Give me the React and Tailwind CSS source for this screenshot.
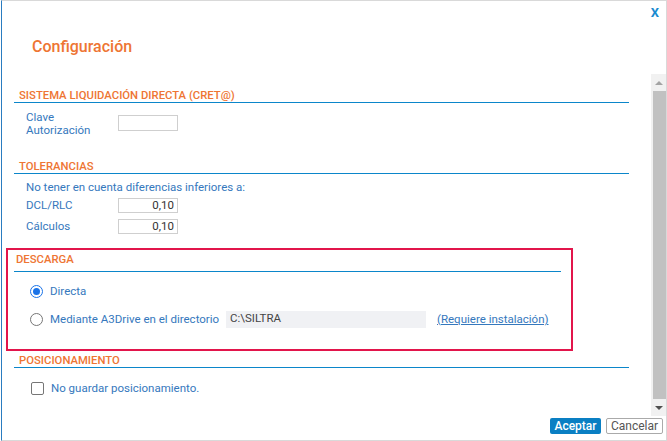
import { useState } from 'react'

const font = { fontFamily: 'Roboto, "Noto Sans", sans-serif' }

function Heading({ children, className = '' }) {
  return (
    <div className={`ml-[12px] w-[615px] border-b border-[#0b86ca] ${className}`}>
      <div className="pl-[5px] pt-px text-[11.3px] leading-[13px] font-medium text-[#ee7533]">{children}</div>
    </div>
  )
}

function Radio({ checked }) {
  return checked ? (
    <span className="flex h-[13px] w-[13px] items-center justify-center rounded-full border-[1.5px] border-[#1a73e8] bg-white">
      <span className="h-[7px] w-[7px] rounded-full bg-[#1a73e8]" />
    </span>
  ) : (
    <span className="h-[13px] w-[13px] rounded-full border border-[#767676] bg-white" />
  )
}

export default function App() {
  const [mode, setMode] = useState('directa')
  const [noGuardar, setNoGuardar] = useState(false)

  return (
    <div className="h-[441px] w-[667px] bg-white pl-px" style={font}>
      <div className="relative flex h-full flex-col border-y border-r border-l border-[#d9d9d9] border-l-[#2a7cc0]">
        {/* Cabecera */}
        <span className="absolute right-[7px] top-[4px] text-[13px] font-bold leading-[16px] text-[#1a8ad0]">X</span>
        <div className="h-[73px] pl-[30px] pt-[36px]">
          <h1 className="text-[16px] leading-[20px] font-medium text-[#ee7533]">Configuración</h1>
        </div>

        {/* Contenido */}
        <div className="flex h-[342px]">
          <div className="flex-1 text-[11.5px] text-[#3578bd]">
            <Heading className="mt-[14px]">SISTEMA LIQUIDACIÓN DIRECTA (CRET@)</Heading>
            <div className="mt-[7px] flex items-start pl-[24px]">
              <div className="w-[92px] pt-px leading-[13px]">
                Clave
                <br />
                Autorización
              </div>
              <input className="mt-[5px] h-[16px] w-[60px] border border-[#cfcfcf] outline-none" />
            </div>

            <Heading className="mt-[22px]">TOLERANCIAS</Heading>
            <div className="mt-[6px] pl-[24px] leading-[14px]">No tener en cuenta diferencias inferiores a:</div>
            <div className="mt-[4px] flex h-[15px] items-center pl-[24px]">
              <span className="w-[92px] pt-px">DCL/RLC</span>
              <div className="flex h-[15px] w-[60px] items-center justify-end border border-[#cfcfcf] pr-[3px] pt-px text-[#333]">0,10</div>
            </div>
            <div className="mt-[6px] flex h-[15px] items-center pl-[24px]">
              <span className="w-[92px] pt-px">Cálculos</span>
              <div className="flex h-[15px] w-[60px] items-center justify-end border border-[#cfcfcf] pr-[3px] pt-px text-[#333]">0,10</div>
            </div>

            {/* Descarga */}
            <div className="ml-[4px] mt-[14px] h-[103px] w-[567px] border-2 border-[#e2154b]">
              <div className="ml-[6px] mt-[2px] w-[547px] border-b border-[#0b86ca] pb-[5px]">
                <div className="pl-[2px] pt-px text-[11.3px] leading-[13px] font-medium text-[#ee7533]">DESCARGA</div>
              </div>
              <div className="mt-[9px] flex h-[20px] cursor-pointer items-center pl-[22px]" onClick={() => setMode('directa')}>
                <Radio checked={mode === 'directa'} />
                <span className="ml-[7px] pt-px">Directa</span>
              </div>
              <div className="mt-[8px] flex h-[20px] cursor-pointer items-center pl-[22px]" onClick={() => setMode('a3drive')}>
                <Radio checked={mode === 'a3drive'} />
                <span className="ml-[7px] w-[176px] pt-px">Mediante A3Drive en el directorio</span>
                <div className="flex h-[17px] w-[200px] items-center bg-[#f0f1f4] pl-[4px] text-[#444]">C:\SILTRA</div>
                <a className="ml-[11px] pt-px underline">(Requiere instalación)</a>
              </div>
            </div>

            <Heading className="mt-[2px]">POSICIONAMIENTO</Heading>
            <div className="mt-[10px] flex h-[20px] cursor-pointer items-center pl-[29px]" onClick={() => setNoGuardar(!noGuardar)}>
              <span className="flex h-[13px] w-[13px] items-center justify-center rounded-[2px] border border-[#767676] text-[10px] leading-none text-[#1a73e8]">
                {noGuardar ? '✓' : ''}
              </span>
              <span className="ml-[7px] pt-px">No guardar posicionamiento.</span>
            </div>
          </div>

          {/* Barra de scroll */}
          <div className="flex w-[15px] flex-col bg-[#f1f1f1]">
            <div className="flex h-[17px] items-center justify-center">
              <span className="h-0 w-0 border-x-[4px] border-b-[4px] border-x-transparent border-b-[#a3a3a3]" />
            </div>
            <div className="ml-[2px] h-[308px] bg-[#c1c1c1]" />
            <div className="flex h-[17px] items-center justify-center">
              <span className="h-0 w-0 border-x-[4px] border-t-[4px] border-x-transparent border-t-[#505050]" />
            </div>
          </div>
        </div>

        {/* Botones */}
        <div className="flex flex-1 items-start justify-end gap-[5px] pr-[3px] pt-[2px]">
          <button className="h-[16px] w-[51px] rounded-[2px] bg-[#0a7fc3] text-[12px] leading-[16px] font-medium text-white">Aceptar</button>
          <button className="h-[16px] w-[57px] rounded-[2px] border border-[#aaa] bg-white text-[12px] leading-[14px] text-[#555]">Cancelar</button>
        </div>
      </div>
    </div>
  )
}
